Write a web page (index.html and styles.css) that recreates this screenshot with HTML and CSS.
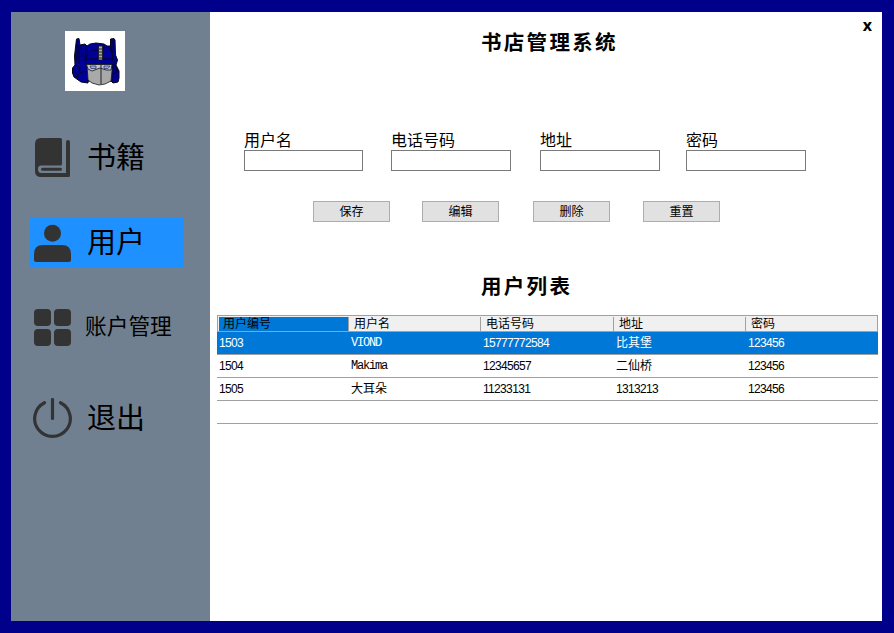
FILE: index.html
```html
<!DOCTYPE html>
<html lang="zh-CN">
<head>
<meta charset="utf-8">
<title>书店管理系统</title>
<link rel="stylesheet" href="styles.css">
</head>
<body>
<div class="window">
  <aside class="sidebar">
    <div class="logo">
      <svg viewBox="0 0 60 60" width="60" height="60">
        <g fill="#000096" stroke="#05051c" stroke-width="1">
          <path d="M11.500 8L14 7.500 15 14 20 13 22 15 25 13 31 12 39 13 42 15 45.500 15V8L49 7.500 50 9 50.500 24 52.500 29 51 34 54 40 54 47 53 51 48 52 46 50 23 50 23 52 16 51 9 46 7.500 42 7.500 37 10 34 9.500 25Z"/>
          <path d="M14 14L14 33M21 15L20 29M23 20L21 29M27 19L32 19M38 17L43 16 47 21 48 29M45.500 15L47 22M20 29L26 28H45L49 30V34H21ZM10 34L14 36 15 42 11 46M15 42L20 40 23 41V51M47 38L50 34 52 39 50 43 47 41V50M16 14L17 26M12 9V30M48 9V21" fill="none"/>
        </g>
        <path d="M22 34H47V40L46 50 40 53 34 54 27 52 23 49Z" fill="#a9a9a9" stroke="#181818" stroke-width=".8"/>
        <path d="M21.500 33.500H47L46 39 41 39 35 37 27 40 23 38Z" fill="#bcc3d4" stroke="#111" stroke-width=".8"/>
        <path d="M25 35h6v2.500h-5zM39 35h6l-2 2.500h-4z" fill="#8faff2" stroke="#101040" stroke-width=".6"/>
        <path d="M33.500 15h4v14h-4z" fill="#aaa" stroke="#111" stroke-width=".8"/>
        <path d="M34 18h4m-4 3h4m-4 3h4m-4 3h4M36 34v19" stroke="#222" fill="none"/>
      </svg>
    </div>
    <nav class="menu">
      <a class="item">
        <svg class="icon" viewBox="0 0 40 40"><path d="M9 0h19.500a1.500 1.500 0 0 1 1.500 1.500v24.500a1.500 1.500 0 0 1-1.500 1.500H9q-3 0-3 3.700T9 35H34V4a1.700 1.700 0 0 1 4 0v33.500a1.500 1.500 0 0 1-1.500 1.500H9q-6 0-6-6v-27q0-6 6-6z"/><path d="M10.500 31.200h18" stroke="#333" stroke-width="3" stroke-linecap="round"/></svg>
        <span class="text">书籍</span>
      </a>
      <a class="item active">
        <svg class="icon" viewBox="0 0 40 40"><circle cx="20.500" cy="10.300" r="8.500"/><path d="M2 37v-6q0-9 9-9h19q9 0 9 9v6q0 2-2 2H4q-2 0-2-2z"/></svg>
        <span class="text">用户</span>
      </a>
      <a class="item account">
        <svg class="icon" viewBox="0 0 40 40"><rect x="2" y="2" width="17" height="17" rx="4"/><rect x="22" y="2" width="17" height="17" rx="4"/><rect x="2" y="22" width="17" height="17" rx="4"/><rect x="22" y="22" width="17" height="17" rx="4"/></svg>
        <span class="text small">账户管理</span>
      </a>
      <a class="item exit">
        <svg class="icon" viewBox="0 0 40 40"><path d="M12.500 4.700a17.800 17.800 0 1 0 16 0M20.500 1.500v19" fill="none" stroke="#333" stroke-width="3.200" stroke-linecap="round"/></svg>
        <span class="text">退出</span>
      </a>
    </nav>
  </aside>
  <main class="main">
    <div class="close">x</div>
    <h1 class="title">书店管理系统</h1>
    <form class="fields">
      <label class="field"><span>用户名</span><input type="text"></label>
      <label class="field"><span>电话号码</span><input type="text"></label>
      <label class="field"><span>地址</span><input type="text"></label>
      <label class="field"><span>密码</span><input type="text"></label>
    </form>
    <div class="buttons">
      <button>保存</button><button>编辑</button><button>删除</button><button>重置</button>
    </div>
    <h2 class="title list-title">用户列表</h2>
    <div class="grid">
      <div class="head"><span class="sorted">用户编号</span><span>用户名</span><span>电话号码</span><span>地址</span><span>密码</span></div>
      <div class="row selected"><span>1503</span><span class="mono">VIOND</span><span>15777772584</span><span class="cjk">比其堡</span><span>123456</span></div>
      <div class="row"><span>1504</span><span class="mono">Makima</span><span>12345657</span><span class="cjk">二仙桥</span><span>123456</span></div>
      <div class="row"><span>1505</span><span class="cjk">大耳朵</span><span>11233131</span><span>1313213</span><span>123456</span></div>
      <div class="row"></div>
    </div>
  </main>
</div>
</body>
</html>
```
FILE: styles.css
```css
* { box-sizing: border-box; }

body {
  margin: 0;
  width: 894px;
  height: 633px;
  overflow: hidden;
  padding: 12px 12px 12px 11px;
  background: #00008b;
  color: #000;
  font-family: "Liberation Sans", "Noto Sans CJK SC", sans-serif;
}

.window { display: flex; height: 609px; background: #fff; }

.sidebar { width: 199px; background: #708090; padding-top: 19px; }
.logo { width: 60px; height: 60px; margin-left: 54px; background: #fff; }
.logo svg { display: block; }

.menu { margin: 42px 0 0 19px; width: 154px; }
.item { display: flex; align-items: center; height: 50px; padding-left: 2px; margin-bottom: 35px; }
.item.active { background: #1e90ff; margin-bottom: 34px; }
.item.account { margin-bottom: 41px; }
.icon { width: 40px; height: 40px; fill: #333; flex: none; }
.text { margin-left: 15px; font-size: 29px; line-height: 40px; white-space: nowrap; }
.text.small { margin-left: 13px; font-size: 21.700px; }
.exit .text { padding-top: 1px; }

.main { position: relative; width: 672px; padding: 15px 4px 0 7px; }
.close {
  position: absolute;
  top: 3px;
  right: 10px;
  font: bold 16px/20px "Open Sans", sans-serif;
}
.title {
  margin: 0;
  padding-left: 264px;
  font-size: 20.500px;
  line-height: 32px;
  letter-spacing: 2.300px;
  font-weight: 700;
}

.fields {
  display: grid;
  grid-template-columns: 147px 149px 146px 120px;
  margin: 72px 0 0 27px;
}
.field { display: flex; flex-direction: column; font-size: 16px; line-height: 19px; }
.field input { width: 120px; height: 21px; margin: 0; padding: 0; border: 1px solid #7a7a7a; background: #fff; }
.field:first-child input { width: 119px; }
.field span { height: 19px; line-height: 20px; }

.buttons { display: grid; grid-template-columns: 109px 111px 110px 77px; margin: 30px 0 0 96px; }
.buttons button {
  width: 77px;
  height: 21px;
  padding: 0 0 2px;
  border: 1px solid #adadad;
  background: #e1e1e1;
  color: #000;
  font: 12px/17px "Noto Sans CJK SC", sans-serif;
}

.list-title { margin-top: 49px; }

.grid { margin-top: 12px; font-size: 12px; }
.head {
  display: grid;
  grid-template-columns: 129px 132px 133px 132px 1fr;
  height: 17px;
  padding: 1px 0 0 1px;
  border: 1px solid #a0a0a0;
  background: #f0f0f0;
  line-height: 14px;
}
.head span { height: 14px; padding-left: 5px; border-left: 1px solid #a0a0a0; }
.head .sorted { padding-left: 4px; border-left: 0; background: #0078d7; }
.row {
  display: grid;
  grid-template-columns: 132px 132px 133px 132px 1fr;
  height: 23px;
  padding-left: 2px;
  border-bottom: 1px solid #a0a0a0;
  line-height: 23px;
  letter-spacing: -0.670px;
}
.row.selected { background: #0078d7; color: #fff; }
.row .cjk { letter-spacing: 0; }
.row .mono { font-family: "Liberation Mono", monospace; letter-spacing: -1.200px; }
```
